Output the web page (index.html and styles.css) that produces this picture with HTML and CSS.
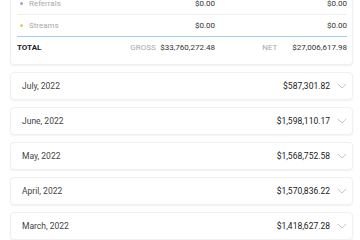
FILE: index.html
```html
<!DOCTYPE html>
<html lang="en">
<head>
  <meta charset="UTF-8" />
  <meta name="viewport" content="width=device-width, initial-scale=1.0"/>
  <title>Earnings</title>
  <link rel="stylesheet" href="styles.css">
</head>
<body>
  <div class="page">

    <!-- Summary card (scrolled) -->
    <div class="card summary">
      <div class="row">
        <div class="label"><span class="dot referrals"></span>Referrals</div>
        <div class="amount">$0.00</div>
        <div class="amount">$0.00</div>
      </div>
      <div class="row">
        <div class="label"><span class="dot streams"></span>Streams</div>
        <div class="amount">$0.00</div>
        <div class="amount">$0.00</div>
      </div>
      <div class="row total">
        <div class="total-title">TOTAL</div>
        <div class="total-cell"><span class="total-label">GROSS</span><span class="amount">$33,760,272.48</span></div>
        <div class="total-cell"><span class="total-label">NET</span><span class="amount">$27,006,617.98</span></div>
      </div>
    </div>

    <!-- Months -->
    <div class="card month">
      <span class="month-name">July, 2022</span>
      <span class="month-amount">$587,301.82</span>
      <svg class="chevron" viewBox="0 0 12 7"><path d="M1 1l5 5 5-5" /></svg>
    </div>
    <div class="card month">
      <span class="month-name">June, 2022</span>
      <span class="month-amount">$1,598,110.17</span>
      <svg class="chevron" viewBox="0 0 12 7"><path d="M1 1l5 5 5-5" /></svg>
    </div>
    <div class="card month">
      <span class="month-name">May, 2022</span>
      <span class="month-amount">$1,568,752.58</span>
      <svg class="chevron" viewBox="0 0 12 7"><path d="M1 1l5 5 5-5" /></svg>
    </div>
    <div class="card month">
      <span class="month-name">April, 2022</span>
      <span class="month-amount">$1,570,836.22</span>
      <svg class="chevron" viewBox="0 0 12 7"><path d="M1 1l5 5 5-5" /></svg>
    </div>
    <div class="card month">
      <span class="month-name">March, 2022</span>
      <span class="month-amount">$1,418,627.28</span>
      <svg class="chevron" viewBox="0 0 12 7"><path d="M1 1l5 5 5-5" /></svg>
    </div>

  </div>
</body>
</html>
```

FILE: styles.css
```css
:root {
  --text-color: #333;
  --muted: #a8a8a8;
  --line: #eeeeee;
  --accent: #9dd3e4;
}

body {
  margin: 0;
  font-family: Roboto, 'Liberation Sans', sans-serif;
  background-color: #fff;
  color: var(--text-color);
  overflow: hidden;
}

.page {
  padding: 0 7px 0 10px;
}

.card {
  background-color: #fff;
  border: 1px solid #f0f0f0;
  border-radius: 4px;
  box-shadow: 0 1px 2px rgba(0, 0, 0, 0.06);
  box-sizing: border-box;
}

/* summary */
.summary {
  margin-top: -7px;
  padding: 0 5px 6px 6px;
  border-top: none;
  border-radius: 0 0 4px 4px;
  font-size: 8px;
}

.row {
  display: grid;
  grid-template-columns: 1fr 132px 132px;
  align-items: center;
  height: 21px;
  border-bottom: 1px solid var(--line);
}

.row:nth-child(2) {
  border-bottom: 1px solid var(--accent);
}

.row.total {
  border-bottom: none;
}

.label {
  display: flex;
  align-items: center;
  color: var(--muted);
}

.dot {
  width: 3px;
  height: 3px;
  border-radius: 50%;
  margin: 0 6px 0 3px;
}

.dot.referrals {
  background-color: #a99be0;
}

.dot.streams {
  background-color: #f6c453;
}

.amount {
  text-align: right;
  color: var(--text-color);
}

.total-title {
  font-weight: bold;
  color: #222;
}

.total-cell {
  display: flex;
  justify-content: flex-end;
}

.total-label {
  width: 30px;
  color: var(--muted);
}

/* months */
.month {
  display: flex;
  align-items: center;
  height: 28px;
  margin-top: 7px;
  padding: 0 5px 0 11px;
  font-size: 8.5px;
}

.month-name {
  flex: 1;
  color: #444;
}

.month-amount {
  color: #222;
}

.chevron {
  width: 10px;
  height: 6px;
  margin-left: 7px;
  fill: none;
  stroke: #b8b8b8;
  stroke-width: 1;
}
```
